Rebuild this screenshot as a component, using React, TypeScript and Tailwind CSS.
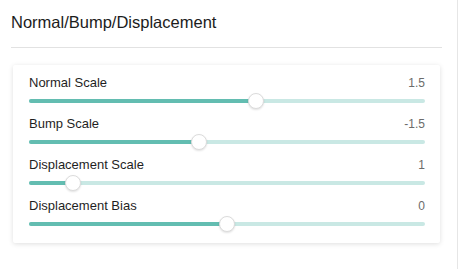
import React from "react";

type Row = { label: string; value: string; frac: number };

const rows: Row[] = [
  { label: "Normal Scale", value: "1.5", frac: 0.575 },
  { label: "Bump Scale", value: "-1.5", frac: 0.425 },
  { label: "Displacement Scale", value: "1", frac: 0.095 },
  { label: "Displacement Bias", value: "0", frac: 0.5 },
];

function Slider({ frac }: { frac: number }) {
  const center = `calc(8px + (100% - 16px) * ${frac})`;
  return (
    <div className="relative h-4 mt-[2px] flex items-center">
      <div className="w-full h-[4px] rounded-full bg-[#c9e8e4] flex">
        <div className="h-full rounded-full bg-[#63bdb1]" style={{ width: center }} />
      </div>
      <div
        className="absolute top-0 w-4 h-4 -ml-2 rounded-full bg-white border border-[#dcdcdc] shadow-[0_1px_2px_rgba(0,0,0,0.12)]"
        style={{ left: center }}
      />
    </div>
  );
}

export default function App() {
  return (
    <div
      className="w-[458px] h-[269px] bg-white border-r border-[#e6e6e6] pl-[11px] pr-[15px] pt-[11px]"
      style={{ fontFamily: '"Liberation Sans", Arial, sans-serif' }}
    >
      <div className="text-[16.5px] leading-[22px] font-medium text-[#1c1c1c]">
        Normal/Bump/Displacement
      </div>
      <div className="mt-[14px] h-px bg-[#e2e2e2]" />
      <div className="mt-[17px] ml-[2px] w-[427px] bg-white rounded-[2px] shadow-[0_1px_5px_rgba(0,0,0,0.13)] pl-4 pr-[15px] pt-[10px] pb-[11px] flex flex-col gap-[7px]">
        {rows.map((r) => (
          <div key={r.label}>
            <div className="flex justify-between items-center h-4">
              <span className="text-[13px] leading-4 font-medium text-[#1f1f1f]">{r.label}</span>
              <span className="text-[12px] leading-4 text-[#6b6b6b]">{r.value}</span>
            </div>
            <Slider frac={r.frac} />
          </div>
        ))}
      </div>
    </div>
  );
}
